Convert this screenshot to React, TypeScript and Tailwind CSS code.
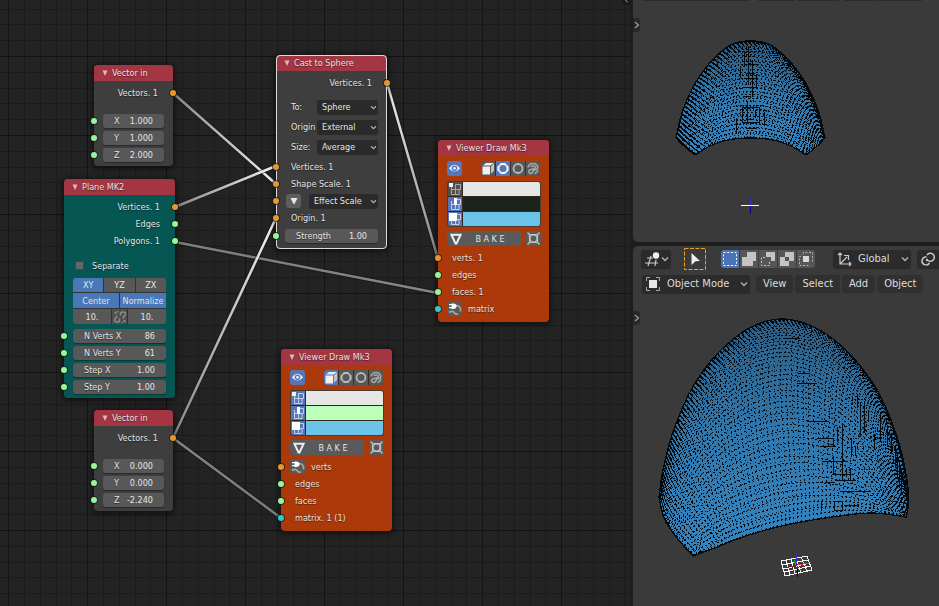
import React, { useId } from "react";

type Pt = [number, number];

/* ---------- shared bits ---------- */

const SOCKET = {
  orange: "bg-[#e8962c]",
  green: "bg-[#96f796]",
  cyan: "bg-[#33c9c9]",
};
type SocketColor = keyof typeof SOCKET;

function Socket({ color, side }: { color: SocketColor; side: "left" | "right" }) {
  return (
    <span
      className={`absolute top-1/2 size-[6px] -translate-y-1/2 rounded-full ring-1 ring-[#1a1a1a]/70 ${SOCKET[color]} ${
        side === "left" ? "-left-[3px]" : "-right-[3px]"
      }`}
    />
  );
}

function Chevron({ className }: { className: string }) {
  return (
    <svg viewBox="0 0 8 6" className={`pointer-events-none ${className}`} fill="none" stroke="#b4b4b4" strokeWidth="1.300">
      <path d="M1 1.500 4 4.500 7 1.500" />
    </svg>
  );
}

function Node({
  title,
  place,
  body,
  selected = false,
  children,
}: {
  title: string;
  place: string;
  body: string;
  selected?: boolean;
  children: React.ReactNode;
}) {
  return (
    <section
      className={`absolute flex flex-col rounded-[4px] shadow-[0_1px_5px_2px_rgba(0,0,0,0.45)] ${place} ${body} ${
        selected ? "outline-1 -outline-offset-1 outline-[#dcdcdc]" : ""
      }`}
    >
      <h2 className="flex h-4 items-center gap-1 rounded-t-[4px] bg-[#a43543] pl-2 font-normal">
        <svg viewBox="0 0 6 6" className="size-[6px]" fill="#d9bcc0">
          <path d="M.5 .5h5L3 6z" />
        </svg>
        {title}
      </h2>
      {children}
    </section>
  );
}

function Output({ label, color, tall = false }: { label: string; color: SocketColor; tall?: boolean }) {
  return (
    <div className={`relative flex items-center justify-end pr-[15px] ${tall ? "h-6" : "h-[17px]"}`}>
      {label}
      <Socket color={color} side="right" />
    </div>
  );
}

function NumberField({ label, value }: { label: string; value: string }) {
  const id = useId();
  return (
    <div className="relative px-[9px]">
      <div className="flex h-[14px] items-center rounded-[3px] bg-[#585858] px-[11px] shadow-[0_1px_1px_rgba(0,0,0,0.35)]">
        <label htmlFor={id} className="whitespace-nowrap">
          {label}
        </label>
        <input id={id} defaultValue={value} className="w-0 min-w-0 flex-1 bg-transparent text-right outline-none" />
      </div>
      <Socket color="green" side="left" />
    </div>
  );
}

function NodeSelect({ label, value, id }: { label: string; value: string; id: string }) {
  return (
    <div className="relative h-[14px] flex-1">
      <select
        id={id}
        aria-label={label}
        className="block h-full w-full appearance-none rounded-[3px] bg-[#2a2a2a] pl-[5px] leading-[14px] shadow-[0_1px_1px_rgba(0,0,0,0.3)] outline-none"
      >
        <option>{value}</option>
      </select>
      <Chevron className="absolute top-[5px] right-[1px] h-[5px] w-[7px]" />
    </div>
  );
}

/* ---------- nodes ---------- */

function VectorIn({ place, values }: { place: string; values: [string, string, string] }) {
  return (
    <Node title="Vector in" place={place} body="bg-[#404040]/95">
      <Output label="Vectors. 1" color="orange" tall />
      <div className="flex flex-col gap-[3px] pt-[9px] pb-1">
        <NumberField label="X" value={values[0]} />
        <NumberField label="Y" value={values[1]} />
        <NumberField label="Z" value={values[2]} />
      </div>
    </Node>
  );
}

function PlaneNode() {
  return (
    <Node title="Plane MK2" place="left-16 top-[179px] w-[111px]" body="bg-[#055a57]/95">
      <div className="flex flex-col pt-[3px]">
        <Output label="Vertices. 1" color="orange" />
        <Output label="Edges" color="green" />
        <Output label="Polygons. 1" color="green" />
      </div>
      <label className="mt-2 flex h-[17px] items-center gap-2 pl-[11px]">
        <input type="checkbox" className="size-[9px] appearance-none border border-[#444] bg-[#666]" />
        Separate
      </label>
      <div className="mx-[9px] mt-1 flex flex-col gap-px overflow-hidden rounded-[3px] bg-[#333]">
        <div className="grid h-[14px] grid-cols-3 gap-px">
          <button className="bg-[#4a77b8]">XY</button>
          <button className="bg-[#585858]">YZ</button>
          <button className="bg-[#585858]">ZX</button>
        </div>
        <div className="grid h-[15px] grid-cols-2 gap-px">
          <button className="bg-[#4a77b8]">Center</button>
          <button className="bg-[#4a77b8]">Normalize</button>
        </div>
        <div className="flex h-[15px] gap-px">
          <input aria-label="Size X" defaultValue="10." className="w-0 min-w-0 flex-1 bg-[#585858] text-center" />
          <button aria-label="Link sizes" className="flex w-[15px] items-center justify-center bg-[#505050]">
            <svg viewBox="0 0 14 14" className="size-[14px]" fill="none" stroke="#8c8c8c" strokeWidth="1.500">
              <path d="M7.500 5.500V3.500q0-1.500 2.500-1.500t2.500 2-2 2.500v2M6.500 8.500v2q0 1.500-2.500 1.500t-2.500-2 2-2.500v-2M1.500 2.500l2 1M10.500 10.500l2 1M4.500 1v1.500M9.500 12v1" />
            </svg>
          </button>
          <input aria-label="Size Y" defaultValue="10." className="w-0 min-w-0 flex-1 bg-[#585858] text-center" />
        </div>
      </div>
      <div className="flex flex-col gap-[3px] pt-[5px] pb-1">
        <NumberField label="N Verts X" value="86" />
        <NumberField label="N Verts Y" value="61" />
        <NumberField label="Step X" value="1.00" />
        <NumberField label="Step Y" value="1.00" />
      </div>
    </Node>
  );
}

function CastNode() {
  const rows: [string, string][] = [
    ["To:", "Sphere"],
    ["Origin", "External"],
    ["Size:", "Average"],
  ];
  return (
    <Node title="Cast to Sphere" place="left-[276px] top-[55px] w-[111px]" body="bg-[#404040]/95" selected>
      <Output label="Vertices. 1" color="orange" tall />
      <div className="flex flex-col gap-[6px] pt-[5px] pb-1">
        {rows.map(([label, value]) => (
          <div key={label} className="flex items-center pr-[9px] pl-[15px]">
            <label htmlFor={"cast-" + value} className="w-[26px]">
              {label}
            </label>
            <NodeSelect id={"cast-" + value} label={label} value={value} />
          </div>
        ))}
      </div>
      <div className="relative flex h-[17px] items-center pl-[15px]">
        Vertices. 1<Socket color="orange" side="left" />
      </div>
      <div className="relative flex h-[17px] items-center pl-[15px]">
        Shape Scale. 1<Socket color="orange" side="left" />
      </div>
      <div className="relative flex h-[17px] items-center gap-2 pr-[9px] pl-[10px]">
        <button aria-label="Effect scale socket" className="flex h-[14px] w-[15px] items-center justify-center rounded-[3px] bg-[#5e5e5e]">
          <svg viewBox="0 0 8 8" className="size-2" fill="#e8e8e8">
            <path d="M.5 1h7L4.500 7h-1z" />
          </svg>
        </button>
        <NodeSelect id="cast-effect" label="Effect" value="Effect Scale" />
        <Socket color="orange" side="left" />
      </div>
      <div className="relative flex h-[17px] items-center pl-[15px]">
        Origin. 1<Socket color="orange" side="left" />
      </div>
      <div className="pt-[3px] pb-[6px]">
        <NumberField label="Strength" value="1.00" />
      </div>
    </Node>
  );
}

function CubeIcon() {
  return (
    <svg viewBox="0 0 14 15" className="size-full">
      <path d="M1.500 5.500h7.500v8h-7.500z" fill="#f0f0f0" />
      <path d="M2 4.500 5 2h8l-3.500 2.500z" fill="#f0f0f0" />
      <path d="m10 5.200 3-2.400v7l-3 3z" fill="#c4c4c4" />
    </svg>
  );
}
function RingIcon({ notched, bright }: { notched: boolean; bright: boolean }) {
  const color = bright ? "#f4f4f4" : "#b8b8b8";
  return (
    <svg viewBox="0 0 14 15" className="size-full" fill="none" stroke={color}>
      <circle cx="7" cy="7.500" r="4.500" strokeWidth="1.800" />
      {notched && <path d="M4.500 2.800h5M4.500 12.200h5M2.300 5v5M11.700 5v5" strokeWidth="1.500" />}
    </svg>
  );
}
function GlobeIcon() {
  return (
    <svg viewBox="0 0 14 15" className="size-full" fill="none" stroke="#a8a8a8" strokeWidth="1.500">
      <path d="M2 6.500a5 5 0 0 1 9.800 0c0 2-1.500 2-3.500 2.500S7 12.500 5 12.500 2.500 11 3 9.500s4.500-.5 6-2.500-2-2.500-4.500-1.500M12 9a5 5 0 0 1-3.500 3.500" />
    </svg>
  );
}
function VertsIcon({ kind, on }: { kind: number; on: boolean }) {
  return (
    <svg viewBox="0 0 14 14" className="size-full" fill="none" stroke={on ? "#c2cfe8" : "#a9a9a9"}>
      <path d="M3.500 4v8.500h4V2.500h5v5h-9M7.500 7.500h3.500v5H7.500" />
      {kind === 0 && <path d="M1 1h4v4H1z" fill="#f0f0f0" stroke="none" />}
      {kind === 1 && <path d="M6 1h3v7H6z" fill="#fff" stroke="none" />}
      {kind === 2 && <path d="M1 1h8v8H1z" fill="#fff" stroke="none" />}
    </svg>
  );
}
function PlugIcon() {
  return (
    <svg viewBox="0 0 15 15" className="size-full" fill="none" stroke="#a8a8a8">
      <path d="M9 4.500c3.500 0 5 2.500 4.500 6M2 11.500c2-1.500 4-1.500 5 0s2 2 4 1.500" strokeWidth="1.600" />
      <path d="M4.500 2.500h1.500c2.500 0 3.500 1 3.500 2.800S8.500 8 6 8H4.500z" fill="#fff" stroke="none" />
      <path d="M2 3.700h3M2 6.700h3" stroke="#fff" strokeWidth="1.200" />
    </svg>
  );
}

type ViewerInput = { label: string; color: SocketColor; plug?: boolean };

function ViewerNode({
  place,
  mode,
  vertsOn,
  colors,
  inputs,
}: {
  place: string;
  mode: number;
  vertsOn: boolean;
  colors: [string, string, string];
  inputs: ViewerInput[];
}) {
  const icons = [
    <CubeIcon />,
    <RingIcon notched bright={mode === 1} />,
    <RingIcon notched={false} bright={false} />,
    <GlobeIcon />,
  ];
  const names = ["Flat", "Facet", "Smooth", "Fragment"];
  const layers = ["Vertices", "Edges", "Faces"];
  return (
    <Node title="Viewer Draw Mk3" place={place} body="bg-[#b03a08]/97">
      <div className="flex flex-col pt-[5px] pr-2 pl-[9px]">
        <div className="flex justify-between pr-px">
          <button aria-label="Show" className="size-[15px] rounded-[3px] bg-[#5577b8]">
            <svg viewBox="0 0 15 15" className="size-full">
              <path d="M2 7.500Q7.500 0 13 7.500 7.500 13.500 2 7.500z" fill="#eef2fb" />
              <circle cx="7.500" cy="7.300" r="2.800" fill="#5577b8" />
              <circle cx="7.500" cy="7.300" r="1.400" fill="#eef2fb" />
            </svg>
          </button>
          <div className="flex gap-px overflow-hidden rounded-[3px] bg-[#3a3028]">
            {icons.map((icon, i) => (
              <button key={i} aria-label={names[i]} className={`h-[15px] w-[14px] ${i === mode ? "bg-[#5577b8]" : "bg-[#585858]"}`}>
                {icon}
              </button>
            ))}
          </div>
        </div>
        <div className="mt-[5px] flex flex-col gap-px overflow-hidden rounded-[3px] border border-[#4a3a30] bg-[#33251c]">
          {colors.map((c, i) => (
            <div key={i} className="flex h-[14px] gap-px">
              <button aria-label={"Display " + layers[i]} className={`w-[14px] ${i === 0 && !vertsOn ? "bg-[#505050]" : "bg-[#5577b8]"}`}>
                <VertsIcon kind={i} on={i > 0 || vertsOn} />
              </button>
              <input
                type="color"
                aria-label={layers[i] + " color"}
                defaultValue={c}
                className="h-full min-w-0 flex-1 appearance-none bg-transparent p-0 [&::-webkit-color-swatch]:border-0 [&::-webkit-color-swatch-wrapper]:p-0"
              />
            </div>
          ))}
        </div>
        <div className="mt-1 flex justify-between">
          <button className="flex h-[15px] w-[74px] items-center rounded-[3px] bg-[#5a5a5a] pl-[3px]">
            <svg viewBox="0 0 12 12" className="size-3" fill="none" stroke="#eee" strokeWidth="2">
              <path d="M1.500 1.800h9L6.500 10.500h-1z" />
            </svg>
            <span className="flex-1 pr-[3px] text-center whitespace-pre">B A K E</span>
          </button>
          <button aria-label="Select object" className="size-[15px] rounded-[3px] bg-[#5a5a5a]">
            <svg viewBox="0 0 15 15" className="size-full" fill="none" stroke="#c4c4c4" strokeWidth="1.200">
              <circle cx="7.500" cy="7.500" r="3.500" />
              <path d="M3.500 3.500h8v8h-8zM1.500 1.500l2.500 2.500M13.500 1.500 11 4M1.500 13.500 4 11M13.500 13.500 11 11" />
            </svg>
          </button>
        </div>
      </div>
      <div className="flex flex-col pt-[3px] pb-[5px]">
        {inputs.map((input) => (
          <div key={input.label} className={`relative flex h-[17px] items-center ${input.plug ? "gap-[6px] pl-[9px]" : "pl-[14px]"}`}>
            {input.plug && (
              <button aria-label={"Create " + input.label + " input"} className="size-[15px] shrink-0 rounded-[3px] bg-[#5a5a5a]">
                <PlugIcon />
              </button>
            )}
            {input.label}
            <Socket color={input.color} side="left" />
          </div>
        ))}
      </div>
    </Node>
  );
}

/* ---------- node canvas ---------- */

const WIRES: { a: Pt; b: Pt; from: string; to: string }[] = [
  { a: [175, 242], b: [438, 293], from: "#7c7c7c", to: "#858585" },
  { a: [173, 438], b: [281, 518], from: "#858585", to: "#7c7c7c" },
  { a: [173, 93], b: [276, 184], from: "#858585", to: "#f4f4f4" },
  { a: [175, 207], b: [276, 166], from: "#858585", to: "#f4f4f4" },
  { a: [173, 438], b: [276, 218], from: "#858585", to: "#f4f4f4" },
  { a: [387, 83], b: [438, 259], from: "#f4f4f4", to: "#858585" },
];

function NodeEditor() {
  return (
    <main className="relative min-w-0 flex-1 overflow-hidden bg-[#232323] text-[9px] leading-[12px] text-[#e4e4e4] [font-family:'DejaVu_Sans_Condensed','DejaVu_Sans',sans-serif] [text-shadow:0_1px_1px_rgba(0,0,0,0.5)]">
      <svg className="absolute inset-0 size-full">
        <defs>
          <pattern id="grid" x="8" y="56" width="79" height="79" patternUnits="userSpaceOnUse">
            <path d="M16.500 0v79M32.500 0v79M48.500 0v79M63.500 0v79M0 16.500h79M0 32.500h79M0 47.500h79M0 63.500h79" stroke="#1b1b1b" />
            <path d="M.5 0v79M0 .5h79" stroke="#131313" />
          </pattern>
          {WIRES.map((w, i) => (
            <linearGradient key={i} id={"wire" + i} gradientUnits="userSpaceOnUse" x1={w.a[0]} y1={w.a[1]} x2={w.b[0]} y2={w.b[1]}>
              <stop offset="0" stopColor={w.from} />
              <stop offset="1" stopColor={w.to} />
            </linearGradient>
          ))}
        </defs>
        <rect width="100%" height="100%" fill="url(#grid)" />
        {WIRES.map((w, i) => (
          <g key={i}>
            <line x1={w.a[0]} y1={w.a[1]} x2={w.b[0]} y2={w.b[1]} stroke="#111" strokeOpacity="0.500" strokeWidth="4.500" />
            <line x1={w.a[0]} y1={w.a[1]} x2={w.b[0]} y2={w.b[1]} stroke={`url(#wire${i})`} strokeWidth="2.500" />
          </g>
        ))}
      </svg>
      <VectorIn place="left-[94px] top-[65px] w-[79px]" values={["1.000", "1.000", "2.000"]} />
      <PlaneNode />
      <VectorIn place="left-[94px] top-[410px] w-[79px]" values={["0.000", "0.000", "-2.240"]} />
      <CastNode />
      <ViewerNode
        place="left-[438px] top-[140px] w-[111px]"
        mode={1}
        vertsOn={false}
        colors={["#e6e6e6", "#1b241b", "#6bc3e8"]}
        inputs={[
          { label: "verts. 1", color: "orange" },
          { label: "edges", color: "green" },
          { label: "faces. 1", color: "green" },
          { label: "matrix", color: "cyan", plug: true },
        ]}
      />
      <ViewerNode
        place="left-[281px] top-[349px] w-[111px]"
        mode={0}
        vertsOn
        colors={["#e6e6e6", "#bbffbb", "#6bc3e8"]}
        inputs={[
          { label: "verts", color: "orange", plug: true },
          { label: "edges", color: "green" },
          { label: "faces", color: "green" },
          { label: "matrix. 1 (1)", color: "cyan" },
        ]}
      />
      <svg viewBox="0 0 8 5" className="absolute top-0 right-0 h-[5px] w-2" fill="none">
        <path d="M0 0h8v5H3Q0 5 0 2z" fill="#1a1a1a" />
        <path d="M3 0l3 2" stroke="#888" />
      </svg>
    </main>
  );
}

/* ---------- 3D viewports ---------- */

// Catmull-Rom curve through the points, parameter 0..1
function curve(pts: Pt[]) {
  const n = pts.length - 1;
  return (t: number): Pt => {
    const s = Math.min(n - 1e-6, Math.max(0, t * n));
    const i = Math.floor(s);
    const f = s - i;
    const p = [pts[Math.max(0, i - 1)], pts[i], pts[i + 1], pts[Math.min(n, i + 2)]];
    const at = (k: 0 | 1) =>
      0.5 *
      (2 * p[1][k] +
        (p[2][k] - p[0][k]) * f +
        (2 * p[0][k] - 5 * p[1][k] + 4 * p[2][k] - p[3][k]) * f * f +
        (3 * p[1][k] - p[0][k] - 3 * p[2][k] + p[3][k]) * f * f * f);
    return [at(0), at(1)];
  };
}

// Coons patch spanned by a lower edge, an upper edge and two sides
function patch(lower: Pt[], upper: Pt[], left: Pt[], right: Pt[]) {
  const [c0, c1, d0, d1] = [curve(lower), curve(upper), curve(left), curve(right)];
  return (u: number, v: number): Pt => {
    const [a, b, l, r] = [c0(u), c1(u), d0(v), d1(v)];
    const [p00, p10, p01, p11] = [c0(0), c0(1), c1(0), c1(1)];
    const at = (k: 0 | 1) =>
      (1 - v) * a[k] + v * b[k] + (1 - u) * l[k] + u * r[k] -
      ((1 - u) * (1 - v) * p00[k] + u * (1 - v) * p10[k] + (1 - u) * v * p01[k] + u * v * p11[k]);
    return [at(0), at(1)];
  };
}

const ease = (v: number) => Math.sin((v * Math.PI) / 2);

function polyline(g: (s: number) => Pt) {
  let d = "";
  for (let k = 0; k <= 36; k++) {
    const [x, y] = g(k / 36);
    d += (k ? "L" : "M") + x.toFixed(1) + " " + y.toFixed(1);
  }
  return d;
}

function meridians(f: (u: number, v: number) => Pt, n: number) {
  return Array.from({ length: n + 1 }, (_, i) => polyline((s) => f(i / n, ease(s)))).join("");
}

function parallels(f: (u: number, v: number) => Pt, n: number) {
  return Array.from({ length: n + 1 }, (_, j) => polyline((s) => f(s, ease(j / n)))).join("");
}

function outline(f: (u: number, v: number) => Pt) {
  const pts: Pt[] = [];
  for (let k = 0; k <= 80; k++) pts.push(f(k / 80, 1));
  for (let k = 10; k >= 0; k--) pts.push(f(1, k / 10));
  for (let k = 40; k >= 0; k--) pts.push(f(k / 40, 0));
  for (let k = 0; k <= 10; k++) pts.push(f(0, k / 10));
  return "M" + pts.map((p) => p[0].toFixed(1) + " " + p[1].toFixed(1)).join("L") + "Z";
}

const frontDome = patch(
  [[62, 155], [77, 146], [95, 140], [117, 138], [140, 140], [158, 146], [173, 155]],
  [[43, 138], [49, 113], [60, 87], [75, 65], [89, 51], [102, 43], [117, 41], [133, 43], [146, 51], [160, 65], [175, 87], [186, 113], [192, 138]],
  [[62, 155], [52, 147], [43, 138]],
  [[173, 155], [183, 147], [192, 138]]
);

// coordinates relative to the lower viewport
const sideDome = patch(
  [[60, 310], [84, 301], [107, 292], [140, 282], [174, 275], [207, 270], [240, 267], [273, 271]],
  [[26, 251], [30, 224], [40, 186], [57, 146], [77, 116], [97, 96], [120, 80], [147, 73], [174, 78], [200, 93], [224, 116], [247, 149], [265, 194], [274, 234], [275, 251]],
  [[60, 310], [44, 292], [31, 272], [26, 251]],
  [[273, 271], [275, 262], [275, 251]]
);

function Dome({
  f,
  id,
  meridianCount,
  parallelCount,
  edges,
}: {
  f: (u: number, v: number) => Pt;
  id: string;
  meridianCount: number;
  parallelCount: number;
  edges: string;
}) {
  return (
    <g>
      <linearGradient id={id} x1="0" y1="0" x2="0" y2="1">
        <stop offset="0" stopColor="#2b5d83" />
        <stop offset="0.450" stopColor="#2f76ab" />
        <stop offset="1" stopColor="#3585c0" />
      </linearGradient>
      <path d={outline(f)} fill={`url(#${id})`} />
      <g fill="none" stroke="#06090c" shapeRendering="crispEdges">
        <path d={meridians(f, meridianCount)} strokeDasharray="1.600 2.900" />
        <path d={parallels(f, parallelCount)} strokeDasharray="1.800 2.200" />
        <path d={edges} />
        <path d={outline(f)} strokeWidth="1.300" />
      </g>
    </g>
  );
}

function RegionTab({ place }: { place: string }) {
  return (
    <button aria-label="Show region" className={`absolute left-0 flex h-[14px] w-[7px] items-center justify-center rounded-r-[3px] bg-[#282828] ${place}`}>
      <svg viewBox="0 0 6 8" className="h-2 w-[6px]" fill="none" stroke="#a0a0a0" strokeWidth="1.200">
        <path d="M1 1l3.500 3L1 7" />
      </svg>
    </button>
  );
}

function SelectModes() {
  const icons = [
    <rect x="2.500" y="2.500" width="13" height="13" fill="none" stroke="#fff" strokeDasharray="2 1.700" />,
    <path d="M7 2h9v9h-3v5H2V7h5z" fill="#c4c4c4" />,
    <g>
      <path d="M7 2h9v9h-4V7H7z" fill="#c4c4c4" />
      <path d="M6 7.500H2.500v8H10.500V12" fill="none" stroke="#c4c4c4" strokeDasharray="2 1.500" />
    </g>,
    <path d="M7 2h9v9h-5v5H2V7h5zM7 7v4h4V7z" fillRule="evenodd" fill="#c4c4c4" />,
    <g>
      <rect x="6" y="6" width="6" height="6" fill="#d8d8d8" />
      <path d="M6.500 4V2.500h9v9H14M4 6.500H2.500v9h9V14" fill="none" stroke="#b0b0b0" strokeDasharray="2 1.500" />
    </g>,
  ];
  const names = ["Set", "Extend", "Subtract", "Invert", "Intersect"];
  return (
    <div className="flex gap-px overflow-hidden rounded-[3px]">
      {icons.map((icon, i) => (
        <button key={i} aria-label={names[i]} className={`size-[18px] ${i === 0 ? "bg-[#4a72b4]" : "bg-[#565656]"}`}>
          <svg viewBox="0 0 18 18" className="size-full">
            {icon}
          </svg>
        </button>
      ))}
    </div>
  );
}

const BOX = "rounded-[3px] bg-[#2b2b2b] shadow-[0_1px_1px_rgba(0,0,0,0.3)]";

function ViewportHeader() {
  return (
    <header className="relative flex flex-col gap-[6px] pt-[3px] pl-2">
      <div className="flex h-5 items-center">
        <button aria-label="Editor type" className={`flex h-[18px] w-[30px] shrink-0 items-center justify-between pr-[2px] pl-1 ${BOX}`}>
          <svg viewBox="0 0 16 16" className="size-4" fill="none" stroke="#c9c9c9" strokeWidth="1.200">
            <path d="M2 7h6M0 12h13M6 5 3 15M11 8.500 10 15" />
            <circle cx="11" cy="4.500" r="3.200" fill="#eee" stroke="none" />
          </svg>
          <Chevron className="h-[6px] w-2" />
        </button>
        <button aria-label="Tweak tool" className="ml-[13px] h-[22px] w-[22px] shrink-0">
          <svg viewBox="0 0 22 22" className="size-full">
            <rect x=".5" y=".5" width="21" height="21" fill="none" stroke="#f0a020" strokeDasharray="4 1.500" />
            <path d="M7.500 5l8.500 8-4.500.2L7.500 17z" fill="#eee" />
          </svg>
        </button>
        <div className="ml-[15px] shrink-0">
          <SelectModes />
        </div>
        <div className={`relative ml-[18px] h-[18px] w-[78px] shrink-0 ${BOX}`}>
          <svg viewBox="0 0 16 16" className="pointer-events-none absolute top-px left-1 size-4" fill="none" stroke="#c9c9c9" strokeWidth="1.200">
            <path d="M3 2v11h11M3 13l7-7M1 4l2-2 2 2M12 11l2 2-2 2M7 4.500h4.500V9" />
          </svg>
          <select aria-label="Transform orientation" className="size-full appearance-none bg-transparent pl-[25px] outline-none">
            <option>Global</option>
          </select>
          <Chevron className="absolute top-[6px] right-[2px] h-[6px] w-2" />
        </div>
        <button aria-label="Pivot point" className={`ml-[6px] h-[18px] w-[30px] shrink-0 pl-[3px] ${BOX}`}>
          <svg viewBox="0 0 16 16" className="size-4" fill="none" stroke="#c9c9c9" strokeWidth="1.500">
            <path d="M6.500 6a4 4 0 1 0 3 6M8 9.500A4 4 0 1 0 7 4" />
            <circle cx="7" cy="9" r="1.200" fill="#c9c9c9" stroke="none" />
          </svg>
        </button>
      </div>
      <div className="flex h-[18px] items-center">
        <div className={`relative ml-px h-[18px] w-[108px] shrink-0 ${BOX}`}>
          <svg viewBox="0 0 16 16" className="pointer-events-none absolute top-px left-[3px] size-4" fill="none" stroke="#a8a8a8">
            <path d="M1.500 5V1.500H5M11 1.500h3.500V5M14.500 11v3.500H11M5 14.500H1.500V11" />
            <path d="M4 4h8v8H4z" fill="#e6e6e6" stroke="none" />
          </svg>
          <select aria-label="Mode" className="size-full appearance-none bg-transparent pl-[25px] outline-none">
            <option>Object Mode</option>
          </select>
          <Chevron className="absolute top-[6px] right-[2px] h-[6px] w-2" />
        </div>
        <nav className="ml-[6px] flex h-[18px] gap-[2px]">
          {["View", "Select", "Add", "Object"].map((item) => (
            <button key={item} className="rounded-[3px] bg-[#303030] px-[7px]">
              {item}
            </button>
          ))}
        </nav>
      </div>
    </header>
  );
}

export default function App() {
  return (
    <div className="flex h-screen overflow-hidden bg-[#1d1d1d]">
      <NodeEditor />
      <aside className="ml-[3px] flex w-[306px] shrink-0 flex-col gap-1 text-[11px] text-[#dcdcdc] [font-family:'DejaVu_Sans_Condensed','DejaVu_Sans',sans-serif]">
        <section className="relative h-2/5 overflow-hidden rounded-bl-[5px] bg-[#3a3a3a]">
          <svg className="absolute inset-0 size-full">
            <path d="M10 .5h106M125 .5h37M165 .5h41M211 .5h33M245 .5h44" stroke="#2c2c2c" />
            <Dome
              f={frontDome}
              id="domeA"
              meridianCount={46}
              parallelCount={40}
              edges="M115.500 47v38M119.500 60v37M111.500 52v15M123.500 74v14M107.500 66v12M111 64.500h13M111 78.500h13M109 87.500h15M114 73.500h8M109.500 107.500h17v15h-17zM114.500 101v21M122.500 110v8M115 119.500h6M111 96.500h6M103.500 118v16M131.500 112v14M113 128.500h10"
            />
            <path d="M117.500 197v8" stroke="#3333cc" />
            <path d="M117.500 206v8" stroke="#000088" />
            <path d="M108 205.500h18" stroke="#fff" />
          </svg>
          <RegionTab place="top-[18px]" />
        </section>
        <section className="relative flex-1 overflow-hidden rounded-tl-[5px] bg-[#3a3a3a]">
          <svg className="absolute inset-0 size-full">
            <Dome
              f={sideDome}
              id="domeB"
              meridianCount={60}
              parallelCount={46}
              edges="M164 137.500h20M151 92.500h16M165 127.500h12M174 175.500h22M184 192.500h16M187 200.500h16M189 215.500h26M199 228.500h21M202 234.500h21M207 245.500h30M211 259.500h15M192 236.500h10M201.500 255.500h8v9h-8zM209.500 177v58M227.500 156v35M231.500 156v30M235.500 164v12M247.500 166v30M200.500 211v18M204.500 181v15M200.500 192v8M218.500 192v19M222.500 200v10M254.500 179v22M241.500 188v14M258.500 190v18M217.500 222v12M213.500 222v8M188.500 256v9M224.500 148v14M262.500 200v22M264.500 206v26M266.500 214v28M268.500 222v24"
            />
            <g fill="none" stroke="#f4f4f4" shapeRendering="crispEdges">
              <path d="M148 315l26-5M149 319l26-5M150 323l27-6M151 326l27-6M152 330l27-6M148 315l4 15M153 314l4 15M158 313l4 15M163 312l5 15M168 311l6 14M174 310l5 14" />
              <path d="M150 322l13-2" stroke="#8b1a1a" />
              <path d="M165 319l11-2" stroke="#ff3333" />
              <path d="M161 314l2 5" stroke="#22aa22" />
              <path d="M163 308v12" stroke="#3333dd" />
              <path d="M164 322v9" stroke="#000088" />
            </g>
          </svg>
          <ViewportHeader />
          <RegionTab place="top-[65px]" />
        </section>
      </aside>
    </div>
  );
}
